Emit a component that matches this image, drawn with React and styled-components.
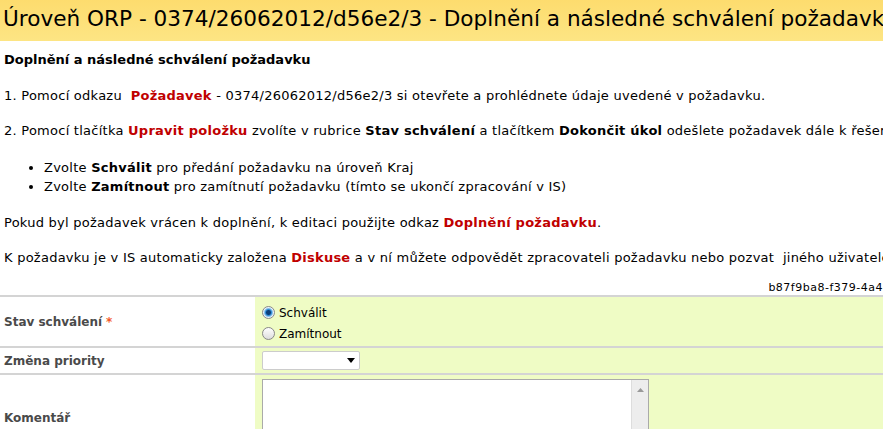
import React from "react";
import styled, { createGlobalStyle } from "styled-components";

const G = createGlobalStyle`
  body { margin:0; font-family: Verdana, "DejaVu Sans", sans-serif; font-size:13px; color:#000; overflow:hidden; background:#fff; }
`;
const Page = styled.div`width:1100px;`;
const Header = styled.div`
  height:41px; background:linear-gradient(#fddc6e,#fde584);
  font-size:21.6px; line-height:24px; padding:7px 0 0 3px; box-sizing:border-box; white-space:nowrap;
`;
const Body = styled.div`padding:8px 4px 0 4px; width:879px; line-height:16px; letter-spacing:0.25px;`;
const H = styled.div`font-weight:bold; margin:3px 0 20px; letter-spacing:0;`;
const P = styled.p`margin:0 0 19px; white-space:nowrap;`;
const L = styled.b`color:#c00000;`;
const Ul = styled.ul`margin:0 0 19px; padding-left:40px; li{line-height:19px;}`;
const Hash = styled.div`text-align:right; font-size:11px; white-space:nowrap; overflow:hidden; margin-top:-5px; height:15px; letter-spacing:0.5px;`;
const Table = styled.div`display:grid; grid-template-columns:255px 1fr; border-top:2px solid #d4d4d4; width:883px;`;
const Label = styled.div`display:flex; align-items:${p=>p.$end?"flex-end":"center"}; padding:0 4px; font-weight:bold; color:#4a4a4a; font-size:12px; height:${p=>p.$h}px; border-bottom:2px solid #d4d4d4; box-sizing:border-box; padding-bottom:${p=>p.$end?"8px":"0"};`;
const Val = styled.div`background:#effcc5; height:${p=>p.$h}px; border-bottom:2px solid #d4d4d4; box-sizing:border-box; padding:${p=>p.$pad}; font-size:12px;`;
const Req = styled.span`color:#f35a2a; margin-left:4px;`;
const Radio = styled.label`display:flex; align-items:center; gap:4px; height:21px;`;
const Dot = styled.span`width:11px;height:11px;border-radius:50%;border:1px solid #888;background:${p=>p.$on?"radial-gradient(circle,#0a3f7a 0 2px,#2c8bd6 3px,#e6f2fb 5px)":"linear-gradient(#fff,#ddd)"};`;
const Select = styled.div`width:98px;height:19px;border:1px solid #ccc;border-radius:2px;background:#fff;display:flex;justify-content:flex-end;align-items:center;padding-right:4px;box-sizing:border-box;`;
const Area = styled.div`width:385px;height:60px;border:1px solid #aaa;border-bottom:none;background:#fff;display:flex;justify-content:flex-end;`;
const Scroll = styled.div`width:16px;background:#ededed;border-left:1px solid #ddd;display:flex;justify-content:center;padding-top:8px;`;

export default function App(){
  return <Page><G/>
    <Header>Úroveň ORP - 0374/26062012/d56e2/3 - Doplnění a následné schválení požadavku</Header>
    <Body>
      <H>Doplnění a následné schválení požadavku</H>
      <P>1. Pomocí odkazu &nbsp;<L>Požadavek</L> - 0374/26062012/d56e2/3 si otevřete a prohlédnete údaje uvedené v požadavku.</P>
      <P>2. Pomocí tlačítka <L>Upravit položku</L> zvolíte v rubrice <b>Stav schválení</b> a tlačítkem <b>Dokončit úkol</b> odešlete požadavek dále k řešení.</P>
      <Ul>
        <li>Zvolte <b>Schválit</b> pro předání požadavku na úroveň Kraj</li>
        <li>Zvolte <b>Zamítnout</b> pro zamítnutí požadavku (tímto se ukončí zpracování v IS)</li>
      </Ul>
      <P>Pokud byl požadavek vrácen k doplnění, k editaci použijte odkaz <L>Doplnění požadavku</L>.</P>
      <P>K požadavku je v IS automaticky založena <L>Diskuse</L> a v ní můžete odpovědět zpracovateli požadavku nebo pozvat &nbsp;jiného uživatele IS do diskuse.</P>
      <Hash>b87f9ba8-f379-4a4</Hash>
    </Body>
    <Table>
      <Label $h={51}>Stav schválení<Req>*</Req></Label>
      <Val $h={51} $pad="5px 7px"><Radio><Dot $on/>Schválit</Radio><Radio><Dot/>Zamítnout</Radio></Val>
      <Label $h={27}>Změna priority</Label>
      <Val $h={27} $pad="3px 7px"><Select><svg width="8" height="5"><path d="M0 0h8L4 5z"/></svg></Select></Val>
      <Label $h={60} $end>Komentář</Label>
      <Val $h={60} $pad="4px 7px 0" style={{borderBottom:"none"}}><Area><Scroll><svg width="7" height="4"><path d="M0 4h7L3.5 0z" fill="#999"/></svg></Scroll></Area></Val>
    </Table>
  </Page>;
}
